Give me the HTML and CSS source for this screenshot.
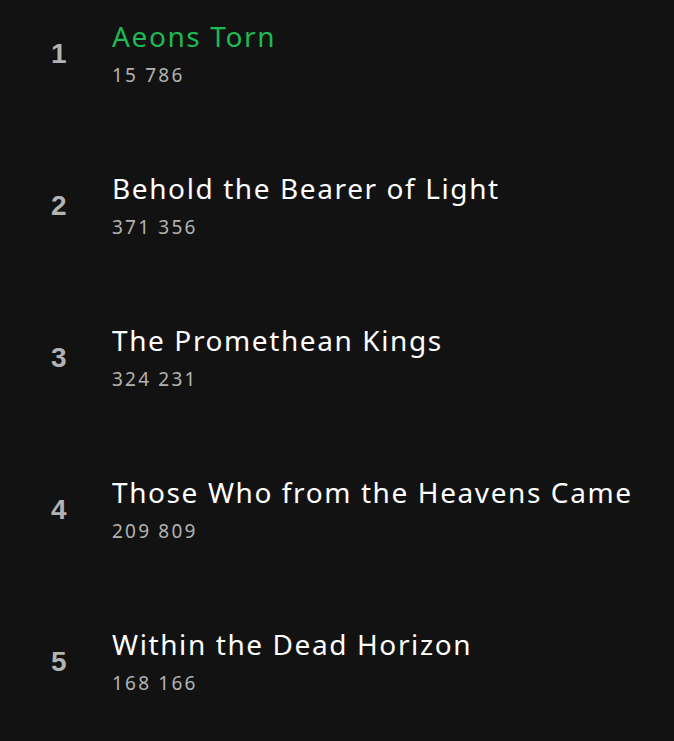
FILE: index.html
```html
<!DOCTYPE html>
<html>
<head>
<meta charset="utf-8">
<link rel="stylesheet" href="styles.css">
</head>
<body>
<ol class="tracks">
  <li class="track">
    <span class="num">1</span>
    <div class="info">
      <div class="title active">Aeons Torn</div>
      <div class="plays">15 786</div>
    </div>
  </li>
  <li class="track">
    <span class="num">2</span>
    <div class="info">
      <div class="title">Behold the Bearer of Light</div>
      <div class="plays">371 356</div>
    </div>
  </li>
  <li class="track">
    <span class="num">3</span>
    <div class="info">
      <div class="title">The Promethean Kings</div>
      <div class="plays">324 231</div>
    </div>
  </li>
  <li class="track">
    <span class="num">4</span>
    <div class="info">
      <div class="title">Those Who from the Heavens Came</div>
      <div class="plays">209 809</div>
    </div>
  </li>
  <li class="track">
    <span class="num">5</span>
    <div class="info">
      <div class="title">Within the Dead Horizon</div>
      <div class="plays">168 166</div>
    </div>
  </li>
</ol>
</body>
</html>
```
FILE: styles.css
```css
html, body {
  margin: 0;
  padding: 0;
  background: #121212;
  height: 100%;
}
.tracks {
  list-style: none;
  margin: 0;
  padding: 0;
}
.track {
  display: flex;
  align-items: center;
  height: 152px;
  box-sizing: border-box;
  padding-top: 19px;
  padding-bottom: 66px;
}
.num {
  width: 112px;
  box-sizing: border-box;
  padding-left: 51px;
  font-family: "Liberation Sans", Arial, sans-serif;
  font-weight: bold;
  font-size: 28px;
  line-height: 1;
  color: #b3b3b3;
  padding-top: 3px;
}
.info {
  display: flex;
  flex-direction: column;
  gap: 11px;
}
.title {
  font-family: "Noto Sans", sans-serif;
  font-size: 28px;
  line-height: 34px;
  letter-spacing: 1.6px;
  color: #ffffff;
}
.title.active {
  color: #1db954;
}
.plays {
  font-family: "Noto Sans", sans-serif;
  font-size: 19px;
  line-height: 22px;
  letter-spacing: 2.2px;
  color: #b3b3b3;
}
```
